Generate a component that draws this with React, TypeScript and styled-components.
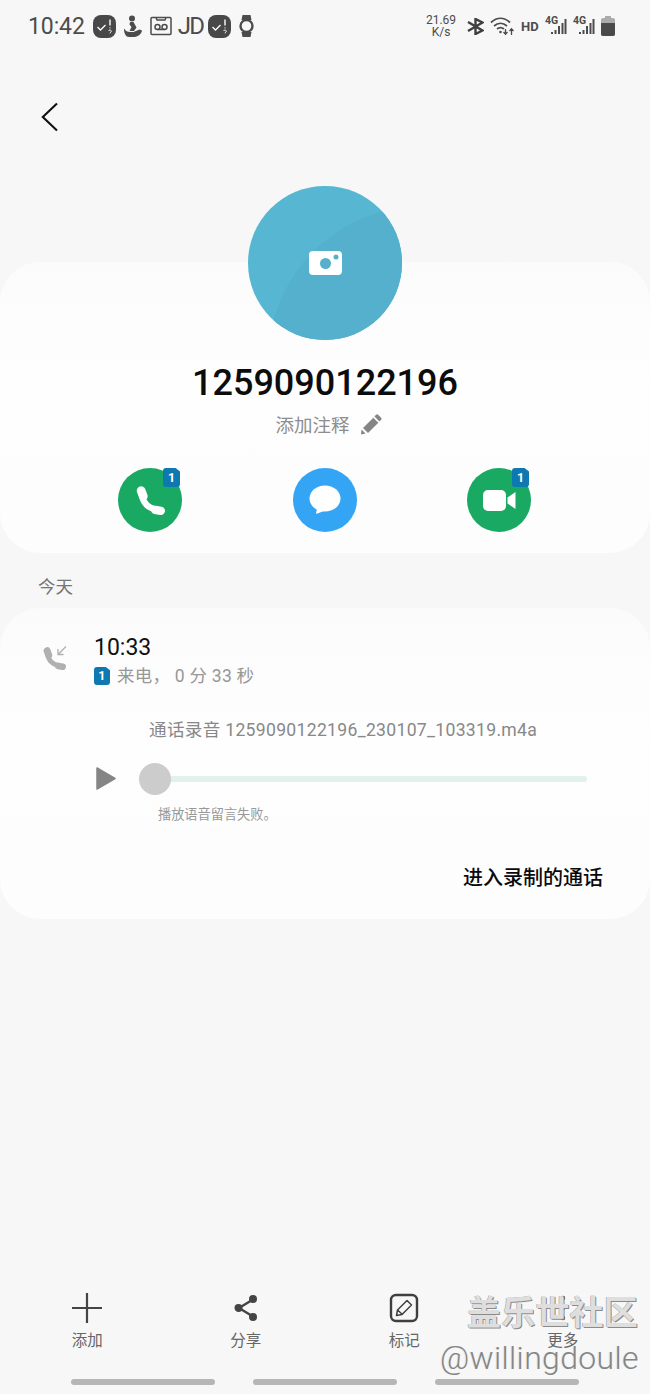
import React from "react";
import styled, { createGlobalStyle } from "styled-components";

const FONT = `Roboto, "Noto Sans CJK SC", sans-serif`;

const GlobalStyle = createGlobalStyle`
  * {
    margin: 0;
    padding: 0;
    box-sizing: border-box;
  }
  body {
    background: #f7f7f7;
    font-family: ${FONT};
  }
`;

const Page = styled.div`
  position: relative;
  display: flex;
  flex-direction: column;
  width: 650px;
  height: 1394px;
  overflow: hidden;
  background: #f7f7f7;
`;

/* status bar */
const StatusBar = styled.div`
  display: flex;
  justify-content: space-between;
  align-items: center;
  height: 52px;
  padding: 0 35px 0 28px;
  color: #4c4c4c;
`;

const StatusGroup = styled.div`
  display: flex;
  align-items: center;
  gap: ${(p: { $gap: number }) => p.$gap}px;
`;

const Clock = styled.span`
  font-size: 23px;
  letter-spacing: -0.1px;
`;

const JdMark = styled.span`
  width: 24px;
  font-size: 24px;
  line-height: 24px;
  letter-spacing: -1.8px;
  margin: 0 -2px 0 -2px;
`;

const Speed = styled.div`
  font-size: 12px;
  line-height: 12px;
  text-align: center;
  width: 32px;
  margin-right: 4px;
`;

const HdMark = styled.span`
  width: 18px;
  font-size: 13px;
  font-weight: 700;
`;

const SignalCell = styled.div`
  position: relative;
  width: 22px;
  height: 20px;
`;

const SignalLabel = styled.span`
  position: absolute;
  left: 0;
  top: -1px;
  font-size: 10.5px;
  font-weight: 700;
  line-height: 11px;
`;

/* header */
const BackRow = styled.div`
  height: 134px;
  padding: 50px 0 0 41px;
`;

/* cards */
const Card = styled.section`
  border-radius: 40px;
  background: linear-gradient(180deg, #fbfbfb 0%, #fefefe 40%, #fdfdfd 100%);
`;

const ProfileCard = styled(Card)`
  display: flex;
  flex-direction: column;
  align-items: center;
  height: 291px;
  margin-top: 76px;
`;

const Avatar = styled.div`
  position: relative;
  display: flex;
  justify-content: center;
  align-items: center;
  flex: none;
  width: 154px;
  height: 154px;
  margin-top: -76px;
  overflow: hidden;
  border-radius: 50%;
  background: #57b7d2;

  &::before {
    content: "";
    position: absolute;
    left: 20px;
    top: 20px;
    width: 310px;
    height: 310px;
    border-radius: 50%;
    background: #54b0cc;
  }

  svg {
    position: relative;
  }
`;

const PhoneNumber = styled.h1`
  margin-top: 20px;
  font-size: 36px;
  line-height: 46px;
  font-weight: 500;
  color: #0c0c0c;
`;

const NoteRow = styled.div`
  display: flex;
  align-items: center;
  gap: 10px;
  margin-top: 5px;
  padding-left: 7px;
  height: 26px;
  font-size: 18.5px;
  color: #8d8d8d;
`;

const Actions = styled.div`
  display: flex;
  gap: 110.5px;
  margin-top: 31px;
  margin-left: -1px;
`;

const ActionCircle = styled.div<{ $color: string }>`
  position: relative;
  display: flex;
  justify-content: center;
  align-items: center;
  width: 64px;
  height: 64px;
  border-radius: 50%;
  background: ${(p) => p.$color};
`;

const SimBadge = styled.span<{ $floating?: boolean }>`
  display: flex;
  justify-content: center;
  align-items: center;
  flex: none;
  width: ${(p) => (p.$floating ? 17 : 16)}px;
  height: ${(p) => (p.$floating ? 19 : 18)}px;
  border-radius: 3px;
  background: #0d79b0;
  clip-path: polygon(0 0, 74% 0, 100% 18%, 100% 100%, 0 100%);
  color: #fff;
  font-size: 12.5px;
  font-weight: 700;
  ${(p) => p.$floating && "position: absolute; top: 0; right: 2px;"}
`;

const SectionLabel = styled.h2`
  height: 55px;
  padding: 22px 0 0 38px;
  font-size: 17.5px;
  line-height: 24px;
  font-weight: 400;
  color: #757575;
`;

const HistoryCard = styled(Card)`
  height: 311px;
  padding: 26px 47px 0 43px;
`;

const CallRow = styled.div`
  display: flex;
  gap: 28px;
`;

const CallIcon = styled.div`
  padding-top: 12px;
  width: 23px;
`;

const CallTime = styled.div`
  font-size: 23px;
  line-height: 28px;
  color: #111;
`;

const CallMeta = styled.div`
  display: flex;
  align-items: center;
  gap: 7px;
  margin-top: 4px;
  font-size: 17.5px;
  line-height: 20px;
  letter-spacing: 0.25px;
  color: #979797;
`;

const FileName = styled.div`
  margin: 32px 0 0 106px;
  font-size: 17.6px;
  line-height: 24px;
  letter-spacing: 0.3px;
  color: #888;
  white-space: nowrap;
`;

const Player = styled.div`
  display: flex;
  align-items: center;
  gap: 23px;
  margin: 24px 16px 0 53px;
`;

const Track = styled.div`
  position: relative;
  flex: 1;
  height: 6px;
  border-radius: 3px;
  background: #e2f1ec;
`;

const Thumb = styled.div`
  position: absolute;
  left: 0;
  top: -13px;
  width: 32px;
  height: 32px;
  border-radius: 50%;
  background: #cccccc;
`;

const PlayError = styled.div`
  margin: 14px 0 0 115px;
  font-size: 13.2px;
  line-height: 20px;
  color: #999;
`;

const GoToRecording = styled.div`
  margin-top: 39px;
  text-align: right;
  font-size: 20px;
  line-height: 28px;
  font-weight: 500;
  color: #0a0a0a;
`;

/* bottom */
const BottomBar = styled.nav`
  display: grid;
  grid-template-columns: repeat(4, 1fr);
  margin-top: auto;
  padding: 0 8px;
`;

const BottomItem = styled.div`
  display: flex;
  flex-direction: column;
  align-items: center;
  gap: 8px;
  font-size: 15.5px;
  line-height: 20px;
  color: #666;
`;

const Pills = styled.div`
  display: flex;
  gap: 38px;
  height: 43px;
  padding: 28px 0 0 71px;
`;

const Pill = styled.div`
  width: 144px;
  height: 6px;
  border-radius: 3px;
  background: #b6b6b6;
`;

const Watermark = styled.div`
  position: absolute;
  right: 12px;
  bottom: 14px;
  text-align: right;
`;

const WatermarkTitle = styled.div`
  margin-bottom: 1px;
  font-size: 34px;
  line-height: 44px;
  font-weight: 700;
  letter-spacing: 0.2px;
  color: #dedede;
  text-shadow: 1px 1px 0 #8a8a8a, -0.5px 0 0 #a0a0a0;
`;

const WatermarkUser = styled.div`
  font-size: 32px;
  line-height: 44px;
  font-weight: 300;
  letter-spacing: 0.35px;
  margin-right: -1px;
  color: #858585;
  text-shadow: -1px 0 0 #ececec;
`;

const TaskIcon = () => (
  <svg width="23" height="23" viewBox="0 0 23 23">
    <rect width="23" height="23" rx="8" fill="#484848" />
    <path d="M4.5 12l3 3 5-5" fill="none" stroke="#fff" strokeWidth="1.3" />
    <path d="M17 4.5v6M17 12.5v.8" fill="none" stroke="#fff" strokeWidth="1.4" />
    <path d="M15.5 16c.5-1.5 3-1 2.800.3-.1.900-1.300.9-1.300 2" fill="none" stroke="#fff" strokeWidth="1" />
  </svg>
);

const FigureIcon = () => (
  <svg width="18" height="22" viewBox="0 0 18 22" fill="#4c4c4c">
    <circle cx="8" cy="3.5" r="3" />
    <path d="M6 7h3.500l3 5.500L10 16H5.500l2-4L5.500 9.500z" />
    <path d="M0 13.500c1.500 2.500 3.500 3.500 6 3.500h3.500l6-2.500 2.500 1c-.5 3.500-4 6-7.500 6.500H5c-3 0-5-3-5-8.500z" />
  </svg>
);

const TapeIcon = () => (
  <svg width="22" height="20" viewBox="0 0 22 20" fill="none" stroke="#4c4c4c" strokeWidth="1.5">
    <rect x="1" y="1.5" width="20" height="17" rx="1" />
    <circle cx="7.5" cy="11" r="2.5" />
    <circle cx="14.5" cy="11" r="2.5" />
    <path d="M7.5 13.5h7M6 1.500l1 2.500h8l1-2.500" />
  </svg>
);

const WatchIcon = () => (
  <svg width="15" height="22" viewBox="0 0 15 22">
    <path d="M3.5 0h8l1 5h-10zM2.500 17h10l-1 5h-8z" fill="#4c4c4c" />
    <circle cx="7.5" cy="11" r="6" fill="none" stroke="#4c4c4c" strokeWidth="2.4" />
  </svg>
);

const BluetoothIcon = () => (
  <svg width="17" height="17" viewBox="0 0 17 17" fill="none" stroke="#3f3f3f" strokeWidth="2.4">
    <path d="M1 4l14.500 8.500L8.500 16V1l7 3.500L1 13" />
  </svg>
);

const WifiIcon = () => (
  <svg width="25" height="20" viewBox="0 0 25 20" fill="none" stroke="#4c4c4c" strokeWidth="1.7">
    <path d="M1 6.500c6-5.500 13-5.500 19 0M4 10c4-3.500 9-3.500 13 0M7 13c2-1.700 5-1.700 7 0" />
    <path d="M15.5 13v5M13.500 16l2 2.200 2-2.200M21.500 19v-6M19.500 15l2-2.200 2 2.200" strokeWidth="1.3" />
    <circle cx="10.5" cy="16" r="1.3" fill="#4c4c4c" stroke="none" />
  </svg>
);

const Bars = () => (
  <svg width="22" height="20" viewBox="0 0 22 20" fill="#4c4c4c">
    <rect x="6" y="16" width="2" height="2" />
    <rect x="9.500" y="14" width="2" height="4" />
    <rect x="13" y="10" width="2" height="8" />
    <rect x="16.500" y="7" width="2" height="11" />
    <rect x="19.500" y="3" width="2" height="15" />
  </svg>
);

const BatteryIcon = () => (
  <svg width="14" height="20" viewBox="0 0 14 20">
    <path d="M4 0h6v2h2a2 2 0 0 1 2 2v14a2 2 0 0 1-2 2H2a2 2 0 0 1-2-2V4a2 2 0 0 1 2-2h2z" fill="#ababab" />
    <path d="M0 7h14v11a2 2 0 0 1-2 2H2a2 2 0 0 1-2-2z" fill="#4a4a4a" />
  </svg>
);

const BackIcon = () => (
  <svg width="17" height="30" viewBox="0 0 17 30" fill="none" stroke="#111" strokeWidth="2.1">
    <path d="M16 1.500L1.800 15 16 28.500" />
  </svg>
);

const CameraIcon = () => (
  <svg width="33" height="24" viewBox="0 0 33 24">
    <rect width="33" height="24" rx="4" fill="#fff" />
    <circle cx="16.500" cy="12.500" r="5.500" fill="#55b0cc" />
    <circle cx="27" cy="6" r="2.500" fill="#55b0cc" />
  </svg>
);

const PencilIcon = () => (
  <svg width="22" height="21" viewBox="0 0 22 21" fill="#858585">
    <path d="M16 .8a1.500 1.500 0 0 1 2.100 0l3 2.900a1.500 1.500 0 0 1 0 2.100L19.500 7.500l-5-5z" />
    <path d="M13.300 3.700l5 5L8 19l-5-5z" />
    <path d="M1.500 15.500l4 4-4.500 1z" />
  </svg>
);

// curved handset: two thick lobes joined by a thinner arc
const Handset = ({ size, color }: { size: number; color: string }) => (
  <svg width={size} height={size} viewBox="0 0 28 28" fill="none" stroke={color} strokeLinecap="round">
    <path d="M5.500 8C6.500 16 12 22 20 22.500" strokeWidth="6" />
    <path d="M5 4.500L7 10" strokeWidth="8.500" />
    <path d="M18.500 23L24 24" strokeWidth="8" />
  </svg>
);

const MessageGlyph = () => (
  <svg width="32" height="30" viewBox="0 0 32 30" fill="#fff">
    <ellipse cx="16" cy="13.500" rx="15.500" ry="13" />
    <path d="M8 23l-1 6 8-3z" />
  </svg>
);

const VideoGlyph = () => (
  <svg width="33" height="21" viewBox="0 0 33 21" fill="#fff">
    <rect width="23" height="21" rx="5" />
    <path d="M24.500 7.500L32.500 2v17l-8-5.500z" />
  </svg>
);

const IncomingCallIcon = () => (
  <svg width="24" height="24" viewBox="0 0 24 24">
    <g transform="translate(0 1)">
      <Handset size={23} color="#b0b0b0" />
    </g>
    <path d="M23 0.500L15 8.500M15 3v5.500h5.500" fill="none" stroke="#b0b0b0" strokeWidth="1.3" />
  </svg>
);

const PlayIcon = () => (
  <svg width="20" height="25" viewBox="0 0 20 25">
    <path d="M1 2l18 10.500L1 23z" fill="#858585" stroke="#858585" strokeWidth="1.5" strokeLinejoin="round" />
  </svg>
);

const PlusIcon = () => (
  <svg width="30" height="30" viewBox="0 0 30 30" stroke="#444" strokeWidth="2.2">
    <path d="M15 0v30M0 15h30" />
  </svg>
);

const ShareIcon = () => (
  <svg width="30" height="30" viewBox="0 0 30 30" fill="#444" stroke="#444" strokeWidth="2.4">
    <path d="M22 6.500L8 15l14 8.500" fill="none" />
    <circle cx="22" cy="6" r="2.800" />
    <circle cx="7.500" cy="15" r="2.800" />
    <circle cx="22" cy="24" r="2.800" />
  </svg>
);

const NoteIcon = () => (
  <svg width="30" height="30" viewBox="0 0 30 30" fill="none" stroke="#3f3f3f">
    <rect x="2" y="2" width="26" height="26" rx="5" strokeWidth="2.4" />
    <path d="M7.500 22.500l1-5.500L18 7.500l4.500 4.500-9.500 9.500zM8.500 17l5 4.500" strokeWidth="1.5" strokeLinejoin="round" />
  </svg>
);

const MoreIcon = () => (
  <svg width="30" height="30" viewBox="0 0 30 30" fill="#444">
    <circle cx="15" cy="5" r="2.200" />
    <circle cx="15" cy="15" r="2.200" />
    <circle cx="15" cy="25" r="2.200" />
  </svg>
);

const bottomItems = [
  { label: "添加", icon: <PlusIcon /> },
  { label: "分享", icon: <ShareIcon /> },
  { label: "标记", icon: <NoteIcon /> },
  { label: "更多", icon: <MoreIcon /> },
];

const App = () => {
  return (
    <>
      <GlobalStyle />
      <Page>
        <StatusBar>
          <StatusGroup $gap={8}>
            <Clock>10:42</Clock>
            <TaskIcon />
            <FigureIcon />
            <TapeIcon />
            <JdMark>JD</JdMark>
            <TaskIcon />
            <WatchIcon />
          </StatusGroup>
          <StatusGroup $gap={6}>
            <Speed>
              21.69
              <br />
              K/s
            </Speed>
            <BluetoothIcon />
            <WifiIcon />
            <HdMark>HD</HdMark>
            <SignalCell>
              <SignalLabel>4G</SignalLabel>
              <Bars />
            </SignalCell>
            <SignalCell>
              <SignalLabel>4G</SignalLabel>
              <Bars />
            </SignalCell>
            <BatteryIcon />
          </StatusGroup>
        </StatusBar>

        <BackRow>
          <BackIcon />
        </BackRow>

        <ProfileCard>
          <Avatar>
            <CameraIcon />
          </Avatar>
          <PhoneNumber>1259090122196</PhoneNumber>
          <NoteRow>
            添加注释
            <PencilIcon />
          </NoteRow>
          <Actions>
            <ActionCircle $color="#19a963">
              <Handset size={29} color="#fff" />
              <SimBadge $floating>1</SimBadge>
            </ActionCircle>
            <ActionCircle $color="#34a5f5">
              <MessageGlyph />
            </ActionCircle>
            <ActionCircle $color="#19a963">
              <VideoGlyph />
              <SimBadge $floating>1</SimBadge>
            </ActionCircle>
          </Actions>
        </ProfileCard>

        <SectionLabel>今天</SectionLabel>

        <HistoryCard>
          <CallRow>
            <CallIcon>
              <IncomingCallIcon />
            </CallIcon>
            <div>
              <CallTime>10:33</CallTime>
              <CallMeta>
                <SimBadge>1</SimBadge>
                来电， 0 分 33 秒
              </CallMeta>
            </div>
          </CallRow>
          <FileName>通话录音 1259090122196_230107_103319.m4a</FileName>
          <Player>
            <PlayIcon />
            <Track>
              <Thumb />
            </Track>
          </Player>
          <PlayError>播放语音留言失败。</PlayError>
          <GoToRecording>进入录制的通话</GoToRecording>
        </HistoryCard>

        <BottomBar>
          {bottomItems.map((item) => (
            <BottomItem key={item.label}>
              {item.icon}
              {item.label}
            </BottomItem>
          ))}
        </BottomBar>
        <Pills>
          <Pill />
          <Pill />
          <Pill />
        </Pills>

        <Watermark>
          <WatermarkTitle>盖乐世社区</WatermarkTitle>
          <WatermarkUser>@willingdoule</WatermarkUser>
        </Watermark>
      </Page>
    </>
  );
};

export default App;
